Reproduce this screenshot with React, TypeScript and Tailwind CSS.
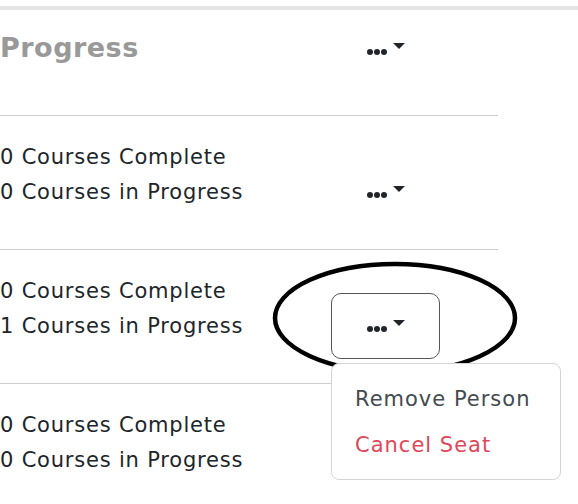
import React from "react";

const font = { fontFamily: '"DejaVu Sans", "Liberation Sans", sans-serif' };

const Dots = () => (
  <span className="flex items-end gap-[6px]">
    <span className="flex gap-[1px] pb-[1px]">
      <span className="w-[6px] h-[6px] rounded-full bg-[#212529]" />
      <span className="w-[6px] h-[6px] rounded-full bg-[#212529]" />
      <span className="w-[6px] h-[6px] rounded-full bg-[#212529]" />
    </span>
    <span className="mb-[7px] w-0 h-0 border-l-[6px] border-r-[6px] border-t-[6px] border-l-transparent border-r-transparent border-t-[#212529]" />
  </span>
);

const ActionButton = ({ open }: { open?: boolean }) => (
  <button
    type="button"
    className={`w-[109px] h-[66px] flex items-center justify-center rounded-[10px] border ${
      open ? "border-[#555]" : "border-transparent"
    }`}
  >
    <Dots />
  </button>
);

const rows = [
  { complete: 0, progress: 0 },
  { complete: 0, progress: 1, open: true },
  { complete: 0, progress: 0 },
];

export default function App() {
  return (
    <div className="relative w-[578px] h-[504px] overflow-hidden bg-white" style={font}>
      <div className="h-[6px]" />
      <div className="h-[4px] bg-[#e6e6e6]" />
      <div className="w-[498px]">
        <div className="flex h-[106px] border-b border-[#cccccc]">
          <div className="w-[331px] pt-[20px]">
            <h2 className="text-[27px] font-bold text-[#999999] leading-[36px] tracking-[0.5px]">Progress</h2>
          </div>
          <div className="pt-[6px]">
            <ActionButton />
          </div>
        </div>
        {rows.map((r, i) => (
          <div key={i} className="flex h-[134px] border-b border-[#cccccc] last:border-b-0">
            <div className="w-[331px] pt-[24px] text-[21px] leading-[35px] text-[#212529] tracking-[0.8px]">
              <div>{r.complete} Courses Complete</div>
              <div>{r.progress} Courses in Progress</div>
            </div>
            <div className="pt-[43px]">
              <ActionButton open={r.open} />
            </div>
          </div>
        ))}
      </div>

      <svg className="absolute left-0 top-0 pointer-events-none" width="578" height="504">
        <ellipse cx="395" cy="318" rx="120" ry="54" fill="none" stroke="#000" strokeWidth="4.5" />
      </svg>

      <div className="absolute left-[331px] top-[363px] w-[230px] h-[117px] bg-white border border-[#d4d4d4] rounded-[8px] py-[12px] text-[21px] leading-[46px] tracking-[1px]">
        <div className="px-[23px] text-[#444a50]">Remove Person</div>
        <div className="px-[23px] text-[#e0475a]">Cancel Seat</div>
      </div>
    </div>
  );
}
